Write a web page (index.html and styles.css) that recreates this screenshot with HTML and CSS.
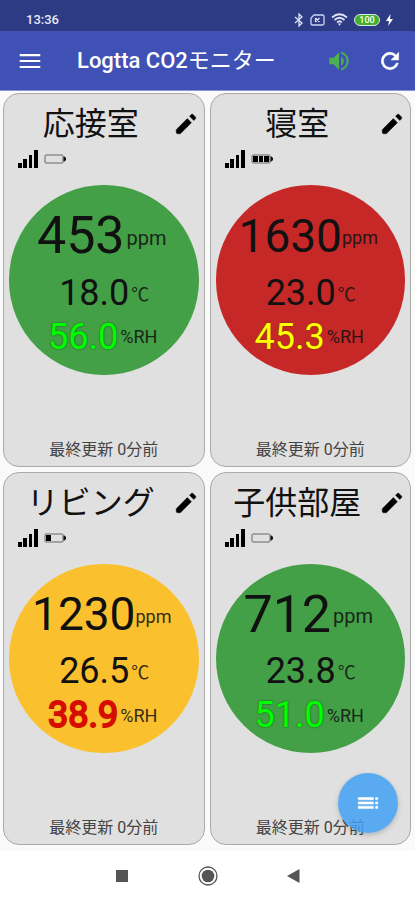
FILE: index.html
```html
<!DOCTYPE html>
<html lang="ja">
	<head>
		<meta charset="utf-8" />
		<meta name="viewport" content="width=device-width, initial-scale=1" />
		<title>Logtta CO2モニター</title>
		<link rel="stylesheet" href="styles.css">
	</head>
	<body>
		<!-- 共通アイコン -->
		<svg class="defs" width="0" height="0" aria-hidden="true">
			<symbol id="pencil" viewBox="0 0 24 24">
				<path d="M3 17.200V19.500q0 1.500 1.500 1.500h2.300L17 10.800l-3.800-3.800zM20.700 7.200a1.200 1.200 0 0 0 0-1.700l-2.200-2.200a1.200 1.200 0 0 0-1.700 0l-1.500 1.500 3.900 3.900z" stroke="#111" stroke-width=".500"/>
			</symbol>
			<symbol id="signal" viewBox="0 0 20 18">
				<path d="M0 13h4v5H0zM5 9h4v9H5zM11 5h3v13h-3zM16 0h4v18h-4z"/>
			</symbol>
			<symbol id="batteryCase" viewBox="0 0 22 10">
				<rect x="1" y="1" width="18" height="8" rx="1" fill="none" stroke="#666"/>
				<path d="M19.500 2.500h1L22 4v2l-1.500 1.500h-1z" fill="#111"/>
			</symbol>
		</svg>

		<div class="status">
			<span class="time">13:36</span>
			<div class="status-icons">
				<svg width="10" height="14" viewBox="0 0 10 14"><path d="M1 4l7 6-3 3V1l3 3-7 6" fill="none" stroke="#dfe3f5" stroke-width="1.300"/></svg>
				<svg width="15" height="12" viewBox="0 0 15 12"><path d="M4 1h8.500q1.500 0 1.500 1.500v7q0 1.500-1.500 1.500h-10Q1 11 1 9.500V4z" fill="none" stroke="#cfd5ef" stroke-width="1.300"/><path d="M5.500 4l4 4M9.500 4l-4 4M5.500 4v4" fill="none" stroke="#dfe3f5" stroke-width="1.200"/></svg>
				<svg width="17" height="13" viewBox="0 0 17 13"><g fill="none" stroke="#dfe3f5" stroke-width="1.700"><path d="M1 4.500Q8.500-2 16 4.500"/><path d="M3.500 7Q8.500 2.500 13.500 7"/><path d="M6 9.500Q8.500 7 11 9.500"/></g><path d="M6.800 10.500h3.400L8.500 12.800z" fill="#dfe3f5"/></svg>
				<span class="charge">100</span>
				<svg width="7" height="12" viewBox="0 0 7 12"><path d="M4.500 0L0 7h3l-.800 5L7 5H4z" fill="#fff"/></svg>
			</div>
		</div>

		<header class="appbar">
			<button class="icon-btn" aria-label="メニュー">
				<svg width="26" height="26" viewBox="0 0 24 24"><path d="M2.500 5.500h19v2h-19zM2.500 11h19v2h-19zM2.500 16.500h19v2h-19z" fill="#fff"/></svg>
			</button>
			<h1>Logtta CO2<span class="kana">モニター</span></h1>
			<button class="icon-btn" aria-label="音声">
				<svg width="26" height="26" viewBox="0 0 24 24"><path d="M3 9v6h4l5 5V4L7 9zm13.500 3A4.500 4.500 0 0 0 14 7.970v8.050A4.500 4.500 0 0 0 16.500 12zM14 3.230v2.060a7 7 0 0 1 0 13.420v2.060a9 9 0 0 0 0-17.540z" fill="#4caf50"/></svg>
			</button>
			<button class="icon-btn" aria-label="更新">
				<svg width="26" height="26" viewBox="0 0 24 24"><path d="M17.650 6.350A8 8 0 1 0 19.730 14h-2.080A6 6 0 1 1 12 6c1.660 0 3.140.690 4.220 1.780L13 11h7V4z" fill="#fff" stroke="#fff" stroke-width=".500"/></svg>
			</button>
		</header>

		<main class="rooms">
			<section class="card">
				<div class="card-head">
					<h2>応接室</h2>
					<button class="edit" aria-label="編集"><svg width="26" height="26"><use href="#pencil"/></svg></button>
				</div>
				<div class="device">
					<svg width="20" height="18"><use href="#signal"/></svg>
					<svg width="22" height="10"><use href="#batteryCase"/></svg>
				</div>
				<div class="circle good">
					<div class="row co2"><span class="value">453</span><span class="unit">ppm</span></div>
					<div class="row temp"><span class="value">18.0</span><span class="unit">℃</span></div>
					<div class="row hum"><span class="value">56.0</span><span class="unit">%RH</span></div>
				</div>
				<p class="updated">最終更新 0分前</p>
			</section>

			<section class="card">
				<div class="card-head">
					<h2>寝室</h2>
					<button class="edit" aria-label="編集"><svg width="26" height="26"><use href="#pencil"/></svg></button>
				</div>
				<div class="device">
					<svg width="20" height="18"><use href="#signal"/></svg>
					<svg width="22" height="10"><use href="#batteryCase"/><path d="M2 2h5v6H2zM8 2h4v6H8zM13 2h5v6h-5z"/></svg>
				</div>
				<div class="circle bad">
					<div class="row co2 long"><span class="value">1630</span><span class="unit">ppm</span></div>
					<div class="row temp"><span class="value">23.0</span><span class="unit">℃</span></div>
					<div class="row hum normal"><span class="value">45.3</span><span class="unit">%RH</span></div>
				</div>
				<p class="updated">最終更新 0分前</p>
			</section>

			<section class="card">
				<div class="card-head">
					<h2>リビング</h2>
					<button class="edit" aria-label="編集"><svg width="26" height="26"><use href="#pencil"/></svg></button>
				</div>
				<div class="device">
					<svg width="20" height="18"><use href="#signal"/></svg>
					<svg width="22" height="10"><use href="#batteryCase"/><path d="M2 2h5v6H2z"/></svg>
				</div>
				<div class="circle warn">
					<div class="row co2 long"><span class="value">1230</span><span class="unit">ppm</span></div>
					<div class="row temp"><span class="value">26.5</span><span class="unit">℃</span></div>
					<div class="row hum dry"><span class="value">38.9</span><span class="unit">%RH</span></div>
				</div>
				<p class="updated">最終更新 0分前</p>
			</section>

			<section class="card">
				<div class="card-head">
					<h2>子供部屋</h2>
					<button class="edit" aria-label="編集"><svg width="26" height="26"><use href="#pencil"/></svg></button>
				</div>
				<div class="device">
					<svg width="20" height="18"><use href="#signal"/></svg>
					<svg width="22" height="10"><use href="#batteryCase"/></svg>
				</div>
				<div class="circle good">
					<div class="row co2"><span class="value">712</span><span class="unit">ppm</span></div>
					<div class="row temp"><span class="value">23.8</span><span class="unit">℃</span></div>
					<div class="row hum"><span class="value">51.0</span><span class="unit">%RH</span></div>
				</div>
				<p class="updated">最終更新 0分前</p>
			</section>

			<button class="fab" aria-label="一覧">
				<svg width="26" height="26" viewBox="0 0 24 24"><path d="M3 9h14V7H3zm0 4h14v-2H3zm0 4h14v-2H3zm16 0h2v-2h-2zm0-10v2h2V7zm0 6h2v-2h-2z" fill="#fff" stroke="#fff" stroke-width=".500"/></svg>
			</button>
		</main>

		<!-- 端末のナビゲーションバー -->
		<nav class="navbar">
			<button aria-label="アプリ履歴"><svg width="22" height="22" viewBox="0 0 22 22"><rect x="5" y="5" width="12" height="12" fill="#555"/></svg></button>
			<button aria-label="ホーム"><svg width="22" height="22" viewBox="0 0 22 22"><circle cx="11" cy="11" r="9" fill="none" stroke="#555" stroke-width="1.300"/><circle cx="11" cy="11" r="6.300" fill="#555"/></svg></button>
			<button aria-label="戻る"><svg width="22" height="22" viewBox="0 0 22 22"><path d="M4 11l12.500-7v14z" fill="#555"/></svg></button>
		</nav>
	</body>
</html>
```
FILE: styles.css
```css
*{
	margin: 0;
	padding: 0;
	box-sizing: border-box;
}
body{
	display: flex;
	flex-direction: column;
	min-height: 100vh;
	background-color: #fafafa;
	color: #111;
	font-family: Roboto, "Noto Sans CJK JP", sans-serif;
}
svg{
	display: block;
}
.defs{
	position: absolute;
}
button{
	border: none;
	background: none;
	color: inherit;
	cursor: pointer;
}
/* ステータスバー */
.status{
	display: flex;
	justify-content: space-between;
	align-items: center;
	height: 31px;
	padding: 8px 22px 0 26px;
	background-color: #2d3b84;
	color: #e6e9f7;
}
.time{
	font-size: 13px;
	font-weight: 500;
}
.status-icons{
	display: flex;
	align-items: center;
	gap: 6px;
}
.charge{
	width: 26px;
	height: 12px;
	border: 1px solid #dfe3f5;
	border-radius: 6px;
	background-color: #43b02a;
	color: #fff;
	font-size: 9px;
	font-weight: 500;
	line-height: 10px;
	text-align: center;
}
/* アプリバー */
.appbar{
	display: flex;
	align-items: center;
	height: 60px;
	padding: 0 12px 0 17px;
	background-color: #3f51b5;
	border-bottom: 1px solid #8c96d6;
	color: #fff;
}
.appbar h1{
	flex: 1;
	padding-left: 34px;
	font-size: 22px;
	font-weight: 500;
	line-height: 32px;
}
.kana{
	font-weight: 400;
}
.icon-btn + .icon-btn{
	margin-left: 25px;
}
/* 部屋カード */
.rooms{
	position: relative;
	flex: 1;
	display: grid;
	grid-template-columns: 1fr 1fr;
	grid-auto-rows: 1fr;
	gap: 5px;
	padding: 2px 4px 6px 3px;
}
.card{
	display: flex;
	flex-direction: column;
	padding: 5px;
	border: 1px solid #aaa;
	border-radius: 16px;
	background-color: #e0e0e0;
}
.card-head{
	display: flex;
	align-items: center;
	height: 50px;
}
.card-head h2{
	flex: 1;
	font-size: 32px;
	font-weight: 400;
	line-height: 48px;
	text-align: center;
}
.device{
	display: flex;
	align-items: center;
	gap: 6px;
	height: 20px;
	margin-bottom: 16px;
	padding-left: 9px;
}
.circle{
	display: flex;
	flex-direction: column;
	justify-content: center;
	aspect-ratio: 1;
	padding-right: 2px;
	border-radius: 50%;
}
.good{
	background-color: #43a047;
}
.bad{
	background-color: #c62828;
}
.warn{
	background-color: #fbc02d;
}
.row{
	display: flex;
	justify-content: center;
	align-items: center;
	gap: 2px;
	height: 36px;
	font-size: 36px;
}
.unit{
	font-size: 18px;
	opacity: 0.85;
}
.co2{
	height: 62px;
	padding-right: 2px;
	font-size: 52px;
}
.co2 .unit{
	padding-top: 4px;
	font-size: 20px;
}
.co2.long{
	gap: 0;
	font-size: 46px;
}
.co2.long .unit{
	font-size: 18px;
}
.temp{
	height: 52px;
	padding-left: 3px;
}
/* 湿度は縁取り文字 */
.hum .value{
	color: #00ff00;
	text-shadow: 0 0 2px #0a5a0a;
}
.hum.normal .value{
	color: #ffff00;
	text-shadow: 0 0 2px #6a3a00;
}
.hum.dry .value{
	color: #f00000;
	-webkit-text-stroke: 2px #d01000;
	text-shadow: none;
}
.updated{
	margin-top: auto;
	color: #444;
	font-size: 16px;
	line-height: 22px;
	text-align: center;
}
.fab{
	position: absolute;
	right: 17px;
	bottom: 18px;
	display: flex;
	justify-content: center;
	align-items: center;
	width: 60px;
	height: 60px;
	border-radius: 50%;
	background-color: rgba(66, 160, 245, 0.85);
	box-shadow: 0 2px 5px rgba(0, 0, 0, 0.2);
}
/* ナビゲーションバー */
.navbar{
	display: flex;
	justify-content: center;
	align-items: center;
	gap: 64px;
	height: 49px;
	background-color: #fff;
}
```
